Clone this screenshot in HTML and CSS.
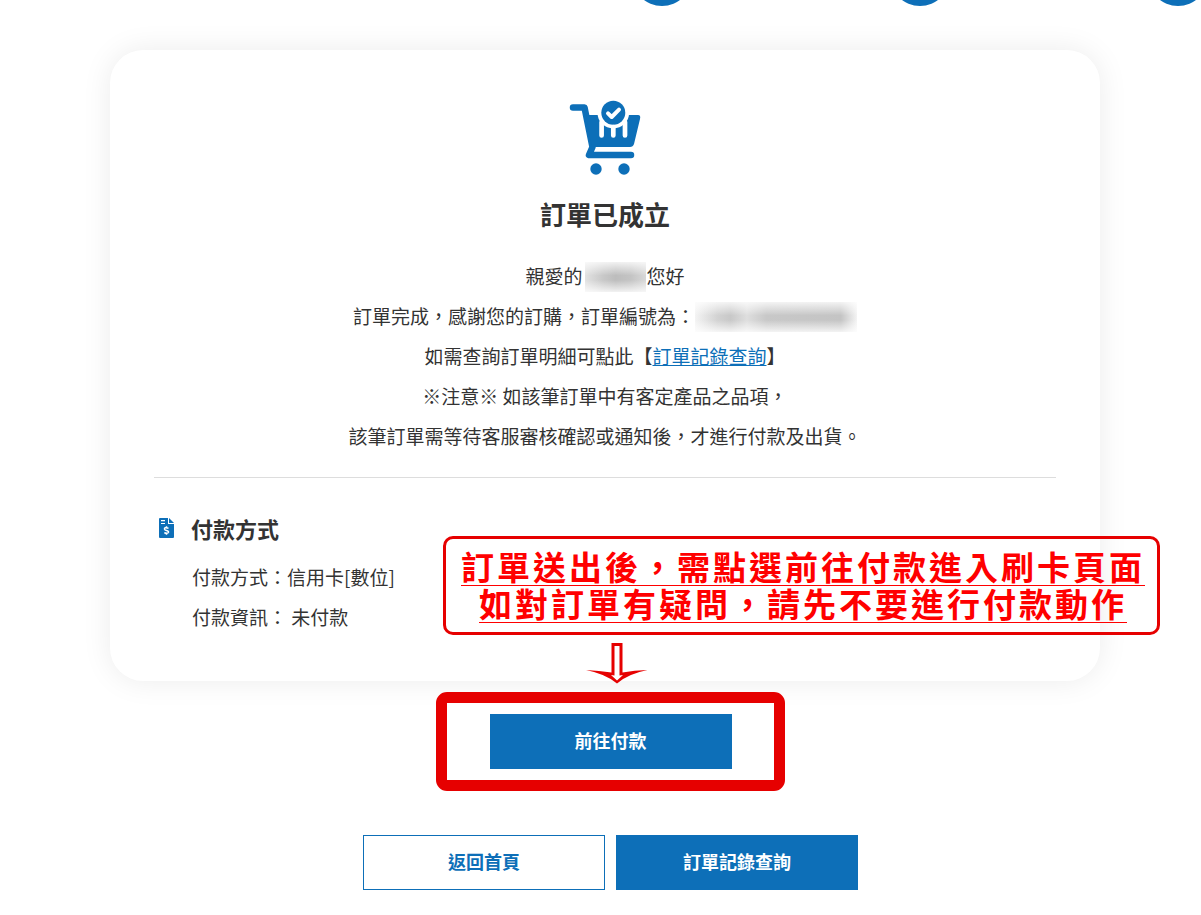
FILE: index.html
```html
<!DOCTYPE html>
<html lang="zh-Hant">
<head>
<meta charset="utf-8">
<meta name="viewport" content="width=device-width, initial-scale=1">
<title>訂單已成立</title>
<link rel="stylesheet" href="styles.css">
</head>
<body>
<div class="steps" aria-hidden="true">
  <span class="step"></span><span class="step"></span><span class="step"></span>
</div>
<main class="page">
  <section class="card">
    <svg class="cart" viewBox="0 0 72 76" aria-hidden="true">
      <path fill="none" stroke="#0d6fb8" stroke-width="6.500" stroke-linecap="round" stroke-linejoin="round" d="M4 7.500h11.500l8 39.500-3.500 8h42"/>
      <path fill="#0d6fb8" d="M17 15h52q3 0 2 4l-6 25q-1 3-4 3H23z"/>
      <circle cx="44.300" cy="12.700" r="15.800" fill="#fff"/>
      <circle cx="44.300" cy="12.700" r="12" fill="#0d6fb8"/>
      <path fill="none" stroke="#fff" stroke-width="4.700" stroke-linecap="round" d="M32.600 22v13.500M44.300 27v8.500M56 22v13.500"/>
      <path fill="none" stroke="#fff" stroke-width="4" stroke-linecap="round" stroke-linejoin="round" d="M39 13.300l3.700 3.700 7.300-7.300"/>
      <circle cx="27" cy="69" r="5.700" fill="#0d6fb8"/>
      <circle cx="55" cy="69" r="5.700" fill="#0d6fb8"/>
    </svg>
    <h1 class="title">訂單已成立</h1>
    <div class="message">
      <p>親愛的<span class="redacted redacted-name"></span>您好</p>
      <p>訂單完成，感謝您的訂購，訂單編號為：<span class="redacted redacted-number"></span></p>
      <p>如需查詢訂單明細可點此【<a class="link" href="#orders">訂單記錄查詢</a>】</p>
      <p>※注意※ 如該筆訂單中有客定產品之品項，</p>
      <p>該筆訂單需等待客服審核確認或通知後，才進行付款及出貨。</p>
    </div>
    <div class="payment">
      <h2 class="subtitle">
        <svg class="bill" viewBox="0 0 16 20" aria-hidden="true">
          <path fill="#0d6fb8" d="M1 0h8v6h6v13q0 1-1 1H1q-1 0-1-1V1q0-1 1-1z"/>
          <path fill="#0d6fb8" d="M10 0l5 5h-5z"/>
          <path stroke="#fff" stroke-width="1.200" d="M2 2.700h4M2 5.500h4"/>
          <path fill="none" stroke="#fff" stroke-width="1.500" d="M9.500 10.200q-4.500-1.200-4 1 .2.900 2 1.300 2.200.5 2 1.700-.6 1.700-4.200.5M7.500 8.300v1.500M7.500 15v1.800"/>
        </svg>
        付款方式
      </h2>
      <p>付款方式：信用卡[數位]</p>
      <p>付款資訊： 未付款</p>
    </div>
    <p class="callout">訂單送出後，需點選前往付款進入刷卡頁面<br>如對訂單有疑問，請先不要進行付款動作</p>
  </section>
  <div class="actions">
    <div class="pay">
      <button class="button" type="button">前往付款</button>
      <span class="frame"></span>
      <svg class="arrow" viewBox="0 0 62 41" aria-hidden="true">
        <path fill="#e60000" fill-rule="evenodd" d="M25.500 0h11v29.500q12-2.500 25-2.500-20 4-30.500 13.500Q20 31 0 27q13 .5 25.500 2.500zM28.500 3v29.500l-3.500-.5 6 5.500 6-5.500-3.500.5V3z"/>
      </svg>
    </div>
    <div class="row">
      <button class="button button-outline" type="button">返回首頁</button>
      <button class="button" type="button">訂單記錄查詢</button>
    </div>
  </div>
</main>
</body>
</html>
```
FILE: styles.css
```css
* { box-sizing: border-box; }

body {
  margin: 0;
  background: #fff;
  color: #333;
  font-family: "Noto Sans CJK TC", sans-serif;
  font-size: 19px;
  line-height: 40px;
}

p, h1, h2 { margin: 0; }

.steps {
  display: flex;
  justify-content: flex-end;
  align-items: flex-end;
  gap: 198px;
  height: 6px;
  overflow: hidden;
}

.step {
  flex: none;
  width: 60px;
  height: 60px;
  border-radius: 50%;
  background: #0d6fb8;
}

.step:last-child { margin-right: -7px; }

.page { padding: 44px 101px 24px 110px; }

.card {
  position: relative;
  padding: 50px 44px 44px;
  border-radius: 33px;
  background: #fff;
  box-shadow: 0 0 30px rgba(0, 0, 0, 0.08);
}

.cart {
  display: block;
  width: 72px;
  height: 76px;
  margin: 0 auto 18px;
}

.title {
  font-size: 26px;
  font-weight: 700;
  text-align: center;
}

.message {
  padding: 22px 0 21px;
  border-bottom: 1px solid #ddd;
  text-align: center;
}

.redacted {
  display: inline-block;
  height: 30px;
  vertical-align: -8px;
}

.redacted-name {
  width: 61px;
  margin: 0 1px 0 2px;
  background:
    linear-gradient(#fffc, #fff0 45%, #fff0 60%, #fffc),
    linear-gradient(90deg, #e2e2e2, #c8c8c8 30%, #bdbdbd 50%, #c4c4c4 75%, #d8d8d8);
}

.redacted-number {
  width: 162px;
  background:
    linear-gradient(#fffc, #fff0 45%, #fff0 60%, #fffc),
    linear-gradient(90deg, #f4f4f4, #d2d2d2 14%, #c8c8c8 22%, #dedede 32%, #c8c8c8 44%, #c4c4c4 90%, #f4f4f4);
}

.link { color: #0d6fb8; }

.payment { padding: 30px 0 0 38px; }

.subtitle {
  display: flex;
  align-items: center;
  gap: 16px;
  margin: 0 0 9px -33px;
  font-size: 22px;
  font-weight: 700;
}

.bill {
  width: 16px;
  height: 20px;
}

.callout {
  position: absolute;
  top: 486px;
  left: 333px;
  padding: 9px 12px 10px 15px;
  border: 3px solid #e60000;
  border-radius: 10px;
  color: #f00;
  font-size: 33px;
  font-weight: 700;
  line-height: 37px;
  letter-spacing: 3px;
  text-align: center;
  text-decoration: underline;
  text-decoration-thickness: 1px;
  text-underline-offset: 5px;
  white-space: nowrap;
}

.actions {
  display: flex;
  flex-direction: column;
  align-items: center;
  gap: 66px;
  padding: 33px 0 0 11px;
}

.pay { position: relative; }

.row {
  display: flex;
  gap: 11px;
}

.button {
  display: block;
  width: 242px;
  height: 55px;
  padding: 0 0 3px;
  border: 1px solid #0d6fb8;
  background: #0d6fb8;
  color: #fff;
  font-family: inherit;
  font-size: 18px;
  font-weight: 700;
}

.button-outline {
  background: #fff;
  color: #0d6fb8;
}

.frame {
  position: absolute;
  inset: -22px -53px -22px -54px;
  border: 11px solid #e60000;
  border-radius: 11px;
  pointer-events: none;
}

.arrow {
  position: absolute;
  top: -71px;
  left: 96px;
  width: 62px;
  height: 41px;
}
```
